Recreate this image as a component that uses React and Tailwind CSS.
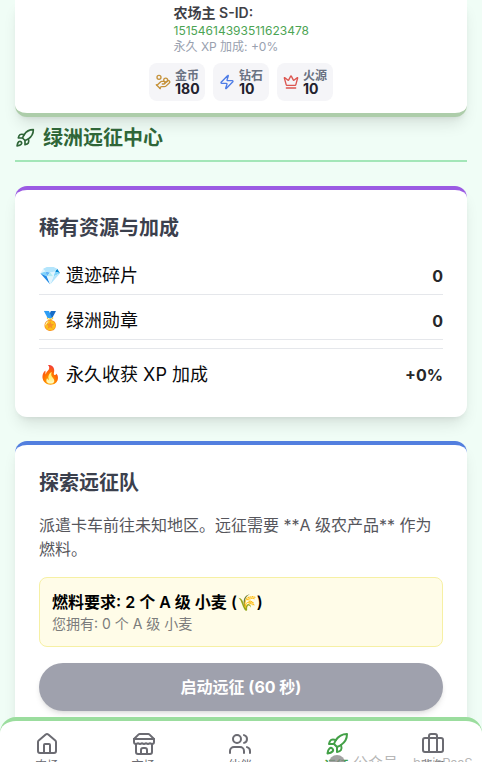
import React from 'react';
import { HandCoins, Zap, Crown, House, Users, Briefcase } from 'lucide-react';

function Icon({ size = 24, className, children }) {
  return (
    <svg
      width={size}
      height={size}
      viewBox="0 0 24 24"
      fill="none"
      stroke="currentColor"
      strokeWidth="2"
      strokeLinecap="round"
      strokeLinejoin="round"
      className={className}
    >
      {children}
    </svg>
  );
}

function RocketIcon(props) {
  return (
    <Icon {...props}>
      <path d="M4.5 16.5c-1.5 1.26-2 5-2 5s3.74-.5 5-2c.71-.84.7-2.13-.09-2.91a2.18 2.18 0 0 0-2.91-.09z" />
      <path d="m12 15-3-3a22 22 0 0 1 2-3.95A12.88 12.88 0 0 1 22 2c0 2.72-.78 7.5-6 11a22.35 22.35 0 0 1-4 2z" />
      <path d="M9 12H4s.55-3.03 2-4c1.62-1.08 5 0 5 0" />
      <path d="M12 15v5s3.03-.55 4-2c1.08-1.62 0-5 0-5" />
    </Icon>
  );
}

function StoreIcon(props) {
  return (
    <Icon {...props}>
      <path d="m2 7 4.41-4.41A2 2 0 0 1 7.83 2h8.34a2 2 0 0 1 1.42.59L22 7" />
      <path d="M4 12v8a2 2 0 0 0 2 2h12a2 2 0 0 0 2-2v-8" />
      <path d="M15 22v-4a2 2 0 0 0-2-2h-2a2 2 0 0 0-2 2v4" />
      <path d="M2 7h20" />
      <path d="M22 7v3a2 2 0 0 1-2 2 2.7 2.7 0 0 1-1.59-.63.7.7 0 0 0-.82 0A2.7 2.7 0 0 1 16 12a2.7 2.7 0 0 1-1.59-.63.7.7 0 0 0-.82 0A2.7 2.7 0 0 1 12 12a2.7 2.7 0 0 1-1.59-.63.7.7 0 0 0-.82 0A2.7 2.7 0 0 1 8 12a2.7 2.7 0 0 1-1.59-.63.7.7 0 0 0-.82 0A2.7 2.7 0 0 1 4 12a2 2 0 0 1-2-2V7" />
    </Icon>
  );
}

const stats = [
  { label: '金币', value: 180, icon: HandCoins, color: 'text-[#c5923a]' },
  { label: '钻石', value: 10, icon: Zap, color: 'text-[#4c7be6]' },
  { label: '火源', value: 10, icon: Crown, color: 'text-[#dc5650]' },
];

const tabs = [
  { label: '农场', icon: House },
  { label: '市场', icon: StoreIcon },
  { label: '伙伴', icon: Users },
  { label: '远征', icon: RocketIcon, active: true },
  { label: '背包', icon: Briefcase },
];

function Header() {
  return (
    <header className="flex h-[117px] flex-col items-center rounded-b-xl border-b-4 border-[#adcdaa] bg-white pt-1 shadow-lg">
      <div className="w-[135px] whitespace-nowrap">
        <p className="text-sm leading-[18px] font-semibold text-[#3f3f46]">农场主 S-ID:</p>
        <p className="pt-px text-xs leading-4 text-[#4ca454]">15154614393511623478</p>
        <p className="text-xs leading-4 text-gray-400">永久 XP 加成: +0%</p>
      </div>
      <div className="mt-2 flex gap-2">
        {stats.map(({ label, value, icon: StatIcon, color }) => (
          <div key={label} className="flex h-[38px] w-14 items-center gap-1 rounded-lg bg-[#f5f5f8] pl-1.5">
            <StatIcon size={16} className={color} />
            <div className="whitespace-nowrap">
              <p className="text-xs leading-3 font-semibold text-gray-500">{label}</p>
              <p className="text-sm leading-[13px] font-bold text-[#22222e]">{value}</p>
            </div>
          </div>
        ))}
      </div>
    </header>
  );
}

function Resource({ emoji, label, value, className }) {
  return (
    <div className={`flex items-center justify-between ${className}`}>
      <span className="text-lg leading-7 text-[#09090b]">
        {emoji} {label}
      </span>
      <span className="font-bold text-[#27272a]">{value}</span>
    </div>
  );
}

function BottomNav() {
  return (
    <nav className="absolute inset-x-0 top-[717px] flex h-[72px] justify-between rounded-t-2xl border-t-4 border-[#9bdd9e] bg-white pt-[11px] pr-[21px] pl-[19px]">
      {tabs.map(({ label, icon: TabIcon, active }) => (
        <div
          key={label}
          className={`flex w-14 flex-col items-center ${active ? 'font-bold text-[#43a047]' : 'text-[#6b6b72]'}`}
        >
          <TabIcon size={24} />
          <span className="mt-0.5 text-xs leading-4">{label}</span>
        </div>
      ))}
    </nav>
  );
}

export default function App() {
  return (
    <div className="relative h-[762px] overflow-hidden bg-[#f0fdf6] px-[15px] font-[Inter,'Noto_Sans_CJK_SC',sans-serif]">
      <Header />

      <h2 className="flex h-[45px] items-center gap-2 border-b-2 border-[#a3e6b8] pb-0.5 text-xl font-bold text-[#2f6638]">
        <RocketIcon size={20} />
        绿洲远征中心
      </h2>

      {/* 稀有资源 */}
      <section className="mt-6 h-[231px] rounded-xl border-t-4 border-[#9b5be3] bg-white px-6 pt-6 shadow-lg">
        <h3 className="text-xl leading-7 font-bold text-[#3b404d]">稀有资源与加成</h3>
        <Resource emoji="💎" label="遗迹碎片" value="0" className="mt-[15px] h-[38px] border-b border-gray-200" />
        <Resource emoji="🏅" label="绿洲勋章" value="0" className="mt-2 h-[37px] border-b border-gray-200" />
        <Resource emoji="🔥" label="永久收获 XP 加成" value="+0%" className="mt-2 h-[53px] border-t border-gray-200" />
      </section>

      {/* 远征队 */}
      <section className="mt-6 h-[340px] rounded-xl border-t-4 border-[#527fdf] bg-white px-6 pt-6 shadow-lg">
        <h3 className="text-xl leading-7 font-bold text-[#3b404d]">探索远征队</h3>
        <p className="mt-4 text-base leading-6 text-[#56565c]">
          派遣卡车前往未知地区。远征需要 **A 级农产品** 作为燃料。
        </p>
        <div className="mt-4 h-[70px] rounded-lg border border-[#f6f0a4] bg-[#fffce8] px-3 pt-3">
          <p className="text-base leading-6 font-semibold text-black">燃料要求: 2 个 A 级 小麦 (🌾)</p>
          <p className="text-sm leading-5 text-[#7c7c7c]">您拥有: 0 个 A 级 小麦</p>
        </div>
        <button className="mt-4 h-12 w-full rounded-full bg-[#9fa1ad] font-bold text-white shadow-md">
          启动远征 (60 秒)
        </button>
      </section>

      <BottomNav />
      <div className="absolute top-[753px] left-[329px] flex items-center text-[15px] leading-5 whitespace-nowrap text-[#a3a3a3]/80">
        <span className="mr-2 size-4 rounded-full bg-[#8c8c8c]/80" />
        <span className="w-[46px]">公众号</span>
        <span className="w-3.5 text-center">·</span>
        <span className="text-[13px] tracking-tight">brainPaaS</span>
      </div>
    </div>
  );
}
